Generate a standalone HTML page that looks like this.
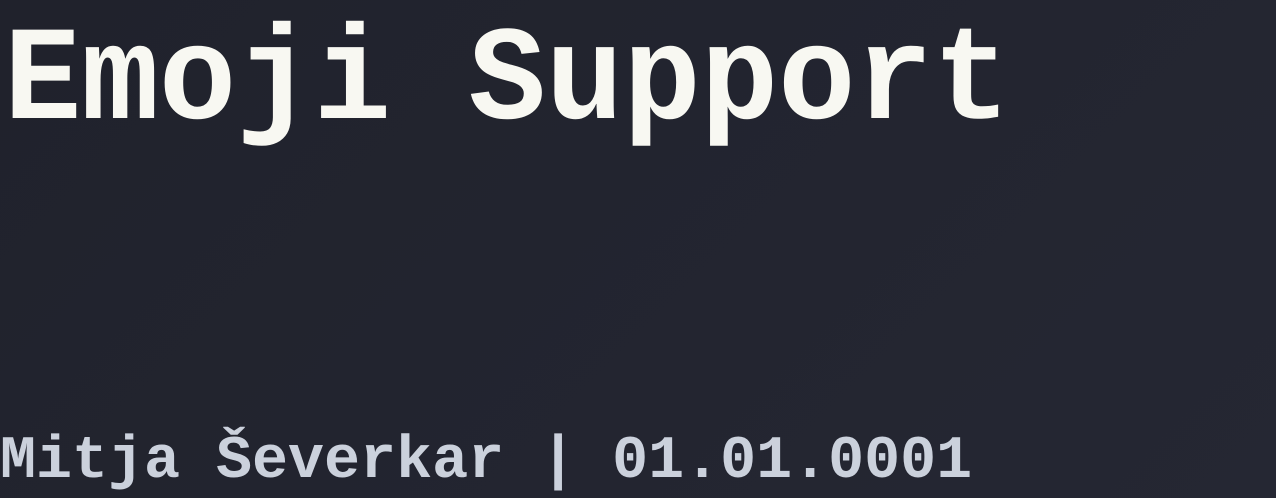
<!DOCTYPE html>
<html><head><meta charset="utf-8"><style>
html,body{margin:0;padding:0}
body{width:1276px;height:498px;overflow:hidden;background:linear-gradient(135deg,#20222c,#252733);position:relative;font-family:"Liberation Mono",monospace;font-weight:bold}
.t{position:absolute;left:4px;top:20px;font-size:129px;line-height:1;color:#f8f8f2;white-space:pre;transform-origin:0 99px;transform:scaleY(1.04)}
.s{position:absolute;left:0px;top:432px;font-size:60px;line-height:1;color:#cbd1dc;white-space:pre}
</style></head><body>
<div class="t">Emoji Support</div>
<div class="s">Mitja Ševerkar | 01.01.0001</div>
</body></html>
